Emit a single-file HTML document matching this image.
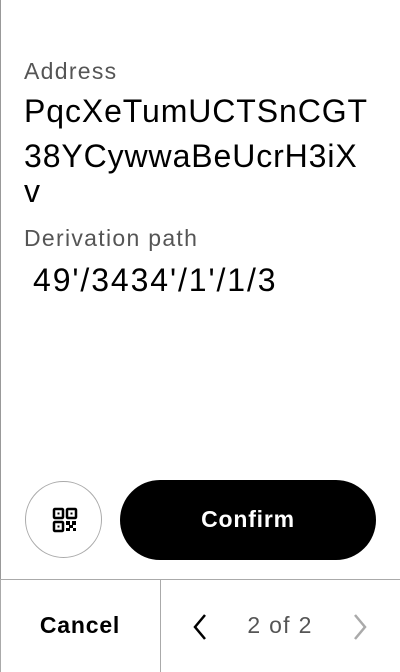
<!DOCTYPE html>
<html><head><style>
body{margin:0;width:400px;height:672px;background:#fff;position:relative;overflow:hidden;font-family:"Liberation Sans",sans-serif;}
.a{position:absolute;white-space:nowrap;line-height:1;}
</style></head><body>
<div style="position:absolute;left:0;top:0;width:1px;height:580px;background:#999"></div>
<div class="a" style="left:24px;top:60px;font-size:23px;color:#555;letter-spacing:1.3px">Address</div>
<div class="a" style="left:24px;top:95px;font-size:32px;color:#000;letter-spacing:0.9px">PqcXeTumUCTSnCGT</div>
<div class="a" style="left:24px;top:140px;font-size:32px;color:#000;letter-spacing:0.9px">38YCywwaBeUcrH3iX</div>
<div class="a" style="left:24px;top:175px;font-size:32px;color:#000">v</div>
<div class="a" style="left:24px;top:227px;font-size:23px;color:#555;letter-spacing:1.3px">Derivation path</div>
<div class="a" style="left:33px;top:264px;font-size:32px;color:#000;letter-spacing:1.9px">49'/3434'/1'/1/3</div>

<div style="position:absolute;left:25px;top:481px;width:77px;height:77px;border:1px solid #aaa;border-radius:50%;box-sizing:border-box"></div>
<svg style="position:absolute;left:52px;top:507px" width="26" height="26" viewBox="0 0 26 26">
<g fill="none" stroke="#000" stroke-width="2.5"><rect x="2" y="2" width="9" height="9" rx="1"/><rect x="15" y="2" width="9" height="9" rx="1"/><rect x="2" y="15" width="9" height="9" rx="1"/></g>
<g fill="#000"><rect x="5.5" y="5.5" width="2" height="2"/><rect x="18.5" y="5.5" width="2" height="2"/><rect x="5.5" y="18.5" width="2" height="2"/>
<rect x="14" y="14" width="4" height="4"/><rect x="20" y="14" width="4" height="4"/><rect x="17" y="18" width="4" height="3"/><rect x="14" y="21" width="4" height="3"/><rect x="21" y="21" width="3" height="3"/></g></svg>
<div style="position:absolute;left:120px;top:480px;width:256px;height:80px;background:#000;border-radius:40px"></div>
<div class="a" style="left:120px;top:508px;width:256px;text-align:center;color:#fff;font-size:23px;font-weight:bold;letter-spacing:0.8px">Confirm</div>

<div style="position:absolute;left:0;top:579px;width:400px;height:1px;background:#aaa"></div>
<div style="position:absolute;left:160px;top:580px;width:1px;height:92px;background:#aaa"></div>
<div style="position:absolute;left:0;top:580px;width:1px;height:92px;background:#aaa"></div>
<div class="a" style="left:0;top:614px;width:160px;text-align:center;font-size:23px;font-weight:bold;color:#000;letter-spacing:0.8px">Cancel</div>
<svg style="position:absolute;left:190px;top:613px" width="20" height="28" viewBox="0 0 20 28"><path d="M15 2 L5 14 L15 26" fill="none" stroke="#000" stroke-width="2.5"/></svg>
<div class="a" style="left:230px;top:614px;width:100px;text-align:center;font-size:23px;color:#555;letter-spacing:1.3px">2 of 2</div>
<svg style="position:absolute;left:350px;top:613px" width="20" height="28" viewBox="0 0 20 28"><path d="M5 2 L15 14 L5 26" fill="none" stroke="#aaa" stroke-width="2.5"/></svg>
</body></html>
